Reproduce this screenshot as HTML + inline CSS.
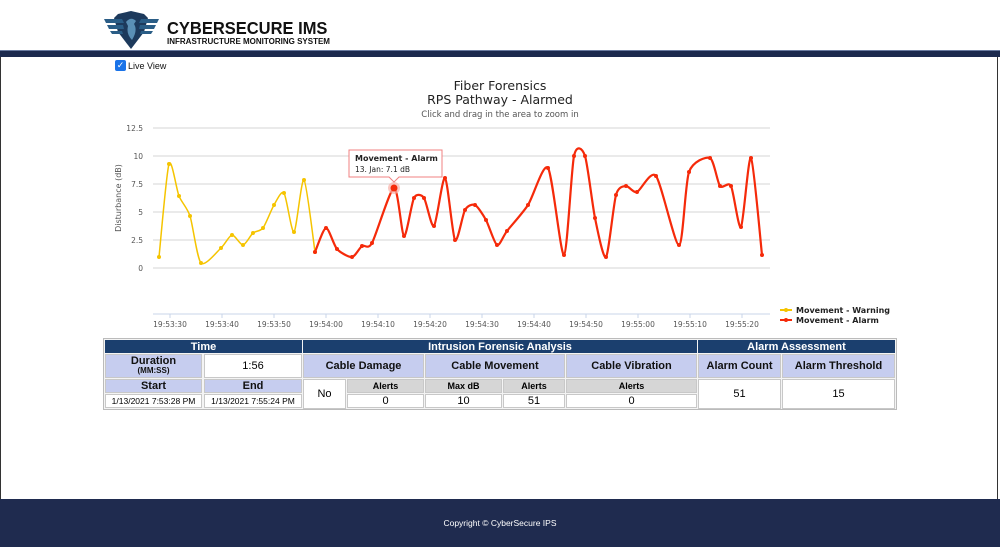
<!DOCTYPE html>
<html><head><meta charset="utf-8"><style>
*{margin:0;padding:0;box-sizing:border-box}
body{width:1000px;height:547px;position:relative;background:#fff;font-family:"Liberation Sans",Arial,sans-serif;overflow:hidden}
.a{position:absolute}
.c{position:absolute;display:flex;flex-direction:column;align-items:center;justify-content:center;text-align:center;border:1px solid #c8c8c8}
.h{background:#1b3f6e;color:#fff;font-weight:bold;font-size:11px;border-color:#1b3f6e}
.l{background:#c6cdef;color:#111;font-weight:bold;font-size:11px}
.g{background:#d6d6d6;font-weight:bold;font-size:9px}
.w{background:#fff;font-size:11px}
.ct{font-family:"DejaVu Sans",sans-serif}
</style></head><body>
<div class="a" style="left:0;top:57px;width:1px;height:443px;background:#333"></div>
<div class="a" style="right:2px;top:57px;width:1px;height:443px;background:#333"></div>
<!-- logo -->
<svg class="a" style="left:104px;top:10px" width="55" height="40" viewBox="0 0 55 40">
<path d="M14 4 L27 1 L40 4 L44 8 L40 22 L27 39 L14 22 L10 8 Z" fill="#1d3a5c"/>
<path d="M0 9 L18 9 L20 13 L2 13 Z M3 15 L19 15 L20 19 L5 19 Z M6 21 L18 21 L19 24 L8 24Z" fill="#2a5d86"/>
<path d="M55 9 L37 9 L35 13 L53 13 Z M52 15 L36 15 L35 19 L50 19 Z M49 21 L37 21 L36 24 L47 24Z" fill="#2a5d86"/>
<path d="M22 12 Q27 6 32 11 L30 14 Q34 20 28 30 Q22 24 24 16 Z" fill="#5a8fb5"/>
</svg>
<div class="a" style="left:167px;top:21px;font-weight:900;font-size:16.5px;line-height:17px;color:#111;transform:scaleY(1.05)">CYBERSECURE IMS</div>
<div class="a" style="left:167px;top:37px;font-weight:bold;font-size:8px;line-height:9px;color:#111">INFRASTRUCTURE MONITORING SYSTEM</div>
<div class="a" style="left:0;top:50px;width:1000px;height:7px;background:#1c2a4e;border-top:1px solid #6a7ba0"></div>
<div class="a" style="left:115px;top:60px;width:11px;height:11px;background:#1a73e8;border-radius:2px;color:#fff;font-size:9px;line-height:11px;text-align:center">✓</div>
<div class="a" style="left:128px;top:61px;font-size:9px;color:#111">Live View</div>
<!-- chart -->
<div class="a ct" style="left:0;width:1000px;top:79px;text-align:center;font-size:12.5px;color:#222;line-height:14px">Fiber Forensics<br>RPS Pathway - Alarmed</div>
<div class="a ct" style="left:0;width:1000px;top:110px;text-align:center;font-size:8.5px;color:#555">Click and drag in the area to zoom in</div>
<svg class="a ct" style="left:0;top:0" width="1000" height="340" font-family="DejaVu Sans,sans-serif">
<g stroke="#e4e4e4" stroke-width="1.5">
<line x1="153" x2="770" y1="128" y2="128"/><line x1="153" x2="770" y1="156" y2="156"/><line x1="153" x2="770" y1="184" y2="184"/><line x1="153" x2="770" y1="212" y2="212"/><line x1="153" x2="770" y1="240" y2="240"/><line x1="153" x2="770" y1="268" y2="268"/>
</g>
<line x1="153" x2="770" y1="314" y2="314" stroke="#c8d4e8" stroke-width="1"/>
<g font-size="7.5" fill="#555" text-anchor="end">
<text x="143" y="131">12.5</text><text x="143" y="159">10</text><text x="143" y="187">7.5</text><text x="143" y="215">5</text><text x="143" y="243">2.5</text><text x="143" y="271">0</text></g>
<text transform="translate(121,198) rotate(-90)" font-size="8" fill="#555" text-anchor="middle">Disturbance (dB)</text>
<g font-size="7.5" fill="#555" text-anchor="middle" id="xl"></g>
<path id="yp" fill="none" stroke="#f5c400" stroke-width="1.5"/>
<path id="rp" fill="none" stroke="#f52a0a" stroke-width="2.2"/>
<g id="dots"></g>
<circle cx="394" cy="188" r="6" fill="#f8b0a8" opacity="0.7"/>
<circle cx="394" cy="188" r="3.5" fill="#f52a0a"/>
<path d="M349 150 H442 V177 H399 L394 182 L389 177 H349 Z" fill="#fff" stroke="#f08080" stroke-width="1"/>
<text x="355" y="161" font-size="8" font-weight="bold" fill="#222">Movement - Alarm</text>
<text x="355" y="172" font-size="7.5" fill="#222">13. Jan: 7.1 dB</text>
<line x1="780" x2="792" y1="310" y2="310" stroke="#f5c400" stroke-width="2"/><circle cx="786" cy="310" r="2" fill="#f5c400"/>
<line x1="780" x2="792" y1="320" y2="320" stroke="#f52a0a" stroke-width="2"/><circle cx="786" cy="320" r="2" fill="#f52a0a"/>
<text x="796" y="313" font-size="8" font-weight="bold" fill="#222">Movement - Warning</text>
<text x="796" y="323" font-size="8" font-weight="bold" fill="#222">Movement - Alarm</text>
</svg>
<!-- table -->
<div class="a" style="left:103px;top:338px;width:794px;height:72px;border:1px solid #bbb;background:#f4f4f4"></div>
<div class="c h" style="left:105px;top:340px;width:197px;height:13px">Time</div>
<div class="c h" style="left:303px;top:340px;width:394px;height:13px">Intrusion Forensic Analysis</div>
<div class="c h" style="left:698px;top:340px;width:197px;height:13px">Alarm Assessment</div>
<div class="c l" style="left:105px;top:354px;width:97px;height:24px;line-height:10px"><div>Duration</div><div style="font-size:8px">(MM:SS)</div></div>
<div class="c w" style="left:204px;top:354px;width:98px;height:24px">1:56</div>
<div class="c l" style="left:303px;top:354px;width:121px;height:24px">Cable Damage</div>
<div class="c l" style="left:425px;top:354px;width:140px;height:24px">Cable Movement</div>
<div class="c l" style="left:566px;top:354px;width:131px;height:24px">Cable Vibration</div>
<div class="c l" style="left:698px;top:354px;width:83px;height:24px">Alarm Count</div>
<div class="c l" style="left:782px;top:354px;width:113px;height:24px">Alarm Threshold</div>
<div class="c l" style="left:105px;top:379px;width:97px;height:14px">Start</div>
<div class="c l" style="left:204px;top:379px;width:98px;height:14px">End</div>
<div class="c w" style="left:303px;top:379px;width:43px;height:30px">No</div>
<div class="c g" style="left:347px;top:379px;width:77px;height:14px">Alerts</div>
<div class="c g" style="left:425px;top:379px;width:77px;height:14px">Max dB</div>
<div class="c g" style="left:503px;top:379px;width:62px;height:14px">Alerts</div>
<div class="c g" style="left:566px;top:379px;width:131px;height:14px">Alerts</div>
<div class="c w" style="left:698px;top:379px;width:83px;height:30px">51</div>
<div class="c w" style="left:782px;top:379px;width:113px;height:30px">15</div>
<div class="c w" style="left:105px;top:394px;width:97px;height:14px;font-size:8.5px">1/13/2021 7:53:28 PM</div>
<div class="c w" style="left:204px;top:394px;width:98px;height:14px;font-size:8.5px">1/13/2021 7:55:24 PM</div>
<div class="c w" style="left:347px;top:394px;width:77px;height:14px">0</div>
<div class="c w" style="left:425px;top:394px;width:77px;height:14px">10</div>
<div class="c w" style="left:503px;top:394px;width:62px;height:14px">51</div>
<div class="c w" style="left:566px;top:394px;width:131px;height:14px">0</div>
<!-- footer -->
<div class="a" style="left:0;top:499px;width:1000px;height:48px;background:#1f2b4f;color:#fff;font-size:8.5px;text-align:center;line-height:48px">Copyright © CyberSecure IPS</div>
<script>
var Y=[[159,257],[169,164],[179,196],[190,216],[201,263],[221,248],[232,235],[243,245],[253,233],[263,228],[274,205],[284,193],[294,232],[304,180],[315,252]];
var R=[[315,252],[326,228],[337,249],[352,257],[362,246],[372,243],[394,188],[404,236],[414,198],[424,198],[434,226],[445,178],[455,240],[465,210],[475,205],[486,220],[497,245],[507,231],[528,205],[548,168],[564,255],[574,156],[585,156],[595,218],[606,257],[616,195],[626,186],[637,192],[656,176],[679,245],[689,172],[710,158],[720,186],[731,186],[741,227],[751,158],[762,255]];
function path(p){var d="M"+p[0][0]+" "+p[0][1];for(var i=0;i<p.length-1;i++){var a=p[i-1]||p[i],b=p[i],c=p[i+1],e=p[i+2]||c;var t=8;d+=" C"+(b[0]+(c[0]-a[0])/t)+" "+(b[1]+(c[1]-a[1])/t)+" "+(c[0]-(e[0]-b[0])/t)+" "+(c[1]-(e[1]-b[1])/t)+" "+c[0]+" "+c[1];}return d;}
document.getElementById("yp").setAttribute("d",path(Y));
document.getElementById("rp").setAttribute("d",path(R));
var ns="http://www.w3.org/2000/svg",g=document.getElementById("dots");
function dots(p,col){p.forEach(function(q){var c=document.createElementNS(ns,"circle");c.setAttribute("cx",q[0]);c.setAttribute("cy",q[1]);c.setAttribute("r",2);c.setAttribute("fill",col);g.appendChild(c);});}
dots(Y,"#f5c400");dots(R,"#f52a0a");
var xl=document.getElementById("xl"),labs=["19:53:30","19:53:40","19:53:50","19:54:00","19:54:10","19:54:20","19:54:30","19:54:40","19:54:50","19:55:00","19:55:10","19:55:20"];
labs.forEach(function(s,i){var x=170+i*52;var t=document.createElementNS(ns,"text");t.setAttribute("x",x);t.setAttribute("y",327);t.textContent=s;xl.appendChild(t);var l=document.createElementNS(ns,"line");l.setAttribute("x1",x);l.setAttribute("x2",x);l.setAttribute("y1",314);l.setAttribute("y2",318);l.setAttribute("stroke","#c8d4e8");xl.appendChild(l);});
</script>
</body></html>
